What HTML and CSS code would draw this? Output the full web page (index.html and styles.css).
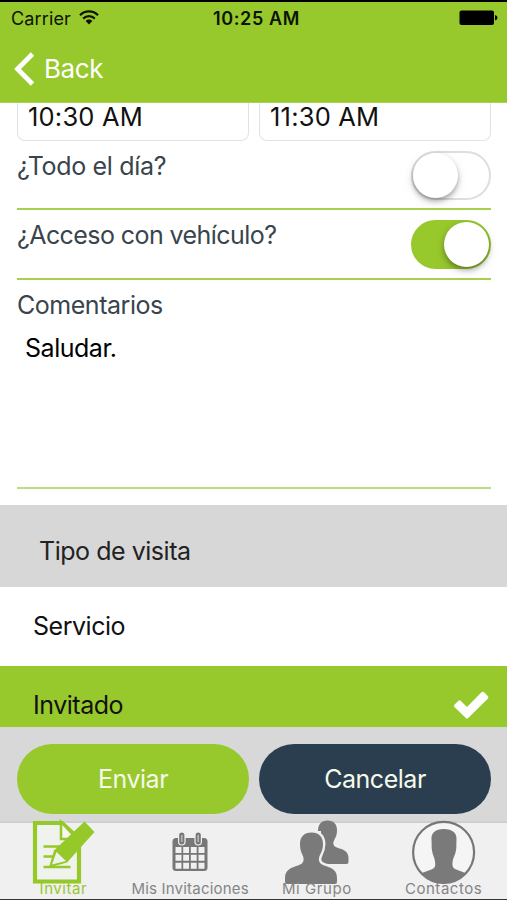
FILE: index.html
```html
<!DOCTYPE html>
<html lang="es">
<head>
<meta charset="utf-8">
<title>Invitar</title>
<link rel="stylesheet" href="styles.css">
</head>
<body>
<div class="phone">
  <header class="header">
    <div class="status">
      <div class="carrier"><span>Carrier</span>
        <svg class="wifi" width="20" height="15" viewBox="0 0 20 15"><g fill="none" stroke="#0c1402" stroke-width="2.2"><path d="M1 5.2C6 .2 14 .2 19 5.2"/><path d="M4.2 8.6c3.3-3.2 8.300-3.200 11.600 0"/></g><path d="M6.700 11c1.900-1.900 4.700-1.900 6.600 0L10 14.500z" fill="#0c1402"/></svg>
      </div>
      <span class="clock">10:25 AM</span>
      <svg class="battery" width="39" height="16" viewBox="0 0 39 16"><rect x=".5" y=".5" width="34.500" height="14.500" rx="2"/><path d="M36 5q2.500.5 2.500 2.800T36 10.500z"/></svg>
    </div>
    <div class="nav">
      <svg class="chevron" width="21" height="34" viewBox="0 0 21 34"><path d="M18.500 2L3.500 17l15 15" fill="none" stroke="#fff" stroke-width="4.800"/></svg>
      <span>Back</span>
    </div>
  </header>
  <main class="content">
    <div class="times">
      <div class="time">10:30 AM</div>
      <div class="time">11:30 AM</div>
    </div>
    <div class="row first"><span class="all-day">¿Todo el día?</span><span class="toggle"></span></div>
    <div class="row"><span class="vehicle">¿Acceso con vehículo?</span><span class="toggle on"></span></div>
    <div class="comments"><div class="label">Comentarios</div><div class="value">Saludar.</div></div>
    <div class="section">Tipo de visita</div>
    <div class="option"><span>Servicio</span></div>
    <div class="option selected"><span>Invitado</span>
      <svg class="check" width="36" height="28" viewBox="0 0 36 28"><path d="M1.400 13.800L5.400 9.800Q6.500 8.900 7.600 9.800L14 16 28.500 1.200Q29.800.2 31 1.200L35 5.300Q35.900 6.500 35 7.600L15.200 27Q14 28 12.800 27L1.400 16Q.5 14.900 1.400 13.800z" fill="#fff"/></svg>
    </div>
  </main>
  <div class="actions">
    <button class="btn send">Enviar</button>
    <button class="btn cancel">Cancelar</button>
  </div>
  <nav class="tabs">
    <div class="tab active">
      <svg width="64" height="64" viewBox="0 0 64 64"><path d="M4 2H31L48 18V60.500H4z" fill="#f0f2ed" stroke="#95c829" stroke-width="4.200"/><path d="M30 1v17h16z" fill="#f5f7f0" stroke="#95c829" stroke-width="2.500"/><path d="M12.500 25.500h17M12.500 35.500h10M12.500 46h27" stroke="#95c829" stroke-width="2.600"/><path d="M18 46.500L23 29.500 53.500.5 63.500 11 36 41.500z" fill="#95c829"/><path d="M21 43.500l4.500-12.500 9.500 9z" fill="#f0f2ed"/></svg>
      <span class="wide">Invitar</span>
    </div>
    <div class="tab">
      <svg width="64" height="64" viewBox="0 0 64 64"><rect x="14.500" y="17" width="35" height="33" rx="3.500" fill="#777"/><path fill="#f0f0f0" d="M17.500 26h6v6h-6zm7.700 0H31v6h-5.800zm7.600 0h5.900v6h-5.900zm7.700 0h6v6h-6zM17.500 33.800h6v6h-6zm7.700 0H31v6h-5.800zm7.600 0h5.900v6h-5.900zm7.700 0h6v6h-6zM17.500 41.700h6v6h-6zm7.700 0H31v6h-5.800zm7.600 0h5.900v6h-5.900zm7.700 0h6v6h-6z"/><g fill="#777" stroke="#f0f0f0" stroke-width="1.200"><rect x="20.600" y="11" width="6.400" height="13" rx="3.200"/><rect x="37" y="11" width="6.400" height="13" rx="3.200"/></g><path d="M23.800 14v7M40.200 14v7" stroke="#b5b5b5" stroke-width="1.600"/></svg>
      <span>Mis Invitaciones</span>
    </div>
    <div class="tab">
      <svg width="64" height="64" viewBox="0 0 64 64"><g fill="#7a7a7a"><path d="M42.500-.5C49-.5 52 3.500 52 9c0 5-1.200 7-2.500 9.500-1 2-1.500 3.500-1 5 .8 2.500 3 3 6 4 5.500 1.500 9 4 9 9.500v4q0 2-2 2H36V10h-3C33 3.500 36.500-.5 42.500-.5z"/><path stroke="#f0f0f0" stroke-width="5" paint-order="stroke" d="M26.500 11.500C34 11.500 38 16 38 23c0 5-1.500 8-3 11-1.200 2.500-1.500 5-.5 7 1 2.500 3.500 3 7 4.200 7 2.300 10.500 5 10.500 12V61q0 2-2 2H2q-2 0-2-2v-3.800c0-7 4-9.700 10.500-12 3.500-1.200 6.500-1.700 7.500-4.200 1-2 .7-4.500-.5-7-1.500-3-2.500-6-2.500-11 0-7 4-11.500 11.500-11.500z"/></g></svg>
      <span class="wide">Mi Grupo</span>
    </div>
    <div class="tab">
      <svg width="64" height="64" viewBox="0 0 64 64"><circle cx="31.600" cy="31.300" r="30.500" fill="#f5f5f5" stroke="#777" stroke-width="2.200"/><path fill="#7a7a7a" d="M31.700 8c9 0 13.500 4 12.800 11.500-.3 3 0 5-.2 7.500-.3 4-1.500 7-2.800 10-1 2.500-1.200 5-1 7.500.2 2.500 2 3.500 5 4.500L54 52.200A30.500 30.500 0 0 1 9.200 52.200L18 49c3-1 5-2 5.200-4.500.2-2.500-.2-5-1-7.500-1.200-3-2.200-6-2.500-10-.2-2.500.1-4.500-.2-7.500C18.800 12 23 8 31.700 8z"/></svg>
      <span class="wide">Contactos</span>
    </div>
  </nav>
</div>
</body>
</html>
```
FILE: styles.css
```css
* { box-sizing: border-box; }
body { margin: 0; font-family: Inter, "Liberation Sans", sans-serif; font-size: 25px; line-height: 30px; letter-spacing: -.47px; color: #111; background: #fff; }
span { white-space: nowrap; }
svg { display: block; flex: none; }
.phone { width: 507px; height: 900px; display: flex; flex-direction: column; overflow: hidden; border-bottom: 1px solid #333; }
.header { height: 103px; flex: none; background: #97c82c; border-top: 2px solid #000; border-bottom: 1px solid #a9d155; }
.status { height: 33px; display: grid; grid-template-columns: 1fr auto 1fr; align-items: center; padding: 0 9px 0 11px; font-size: 18px; letter-spacing: .15px; color: #0c1402; }
.carrier { display: flex; align-items: center; gap: 8px; }
.wifi { margin-bottom: 2px; }
.clock { font-weight: 600; font-size: 18px; letter-spacing: .6px; padding-left: 4px; }
.battery { justify-self: end; margin-bottom: 1px; }
.nav { display: flex; align-items: center; gap: 9px; height: 67px; padding-left: 14px; color: #fff; font-size: 26px; letter-spacing: -.4px; }
.content { flex: none; height: 624px; overflow: hidden; }
.times { display: flex; gap: 10px; padding: 0 16px 0 17px; font-size: 25.500px; letter-spacing: .2px; }
.time { height: 38px; width: 232px; border: 1px solid #e2e2e2; border-top: 0; border-radius: 0 0 8px 8px; padding-left: 10px; line-height: 28px; color: #111; }
.row { display: flex; justify-content: space-between; align-items: flex-start; height: 70px; margin: 0 16px 0 17px; padding-top: 10px; border-bottom: 2px solid #a6d04e; color: #39444c; }
.row.first { height: 69px; }
.all-day { letter-spacing: -.33px; }
.vehicle { letter-spacing: -.57px; }
.toggle { width: 80px; height: 49px; border-radius: 25px; border: 2px solid #dedede; background: #fff; display: flex; justify-content: flex-start; }
.toggle::before { content: ""; width: 45px; height: 45px; border-radius: 50%; background: #fff; box-shadow: 0 3px 5px rgba(0,0,0,.3), 0 4px 12px rgba(0,0,0,.1); }
.toggle.on { background: #97c82c; border-color: #97c82c; justify-content: flex-end; }
.comments { height: 209px; margin: 0 16px 0 17px; padding-top: 10px; border-bottom: 2px solid #bddb82; }
.label { color: #39444c; }
.value { color: #000; padding: 13px 8px; }
.section { height: 82px; margin-top: 16px; background: #d7d7d7; padding: 31px 39px 0; color: #222; }
.option { height: 79px; padding: 24px 18px 0 33px; display: flex; justify-content: space-between; align-items: flex-start; }
.option.selected { background: #97c82c; }
.check { margin-top: 1px; }
.actions { flex: none; height: 94px; display: flex; gap: 10px; padding: 17px 16px 8px 17px; background: #d8d8d8; }
.btn { width: 232px; height: 70px; border: 0; border-radius: 35px; font: inherit; letter-spacing: inherit; color: #f5faea; padding: 0; }
.send { background: #97c82c; }
.cancel { background: #2b3e50; }
.tabs { flex: none; height: 78px; display: grid; grid-template-columns: repeat(4, 1fr); background: #f0f0f0; border-top: 2px solid #cfcfcf; font-size: 15px; line-height: 18px; letter-spacing: .2px; color: #858585; }
.tab { display: flex; flex-direction: column; align-items: center; }
.tab span { margin-top: -5px; position: relative; }
.tab .wide { letter-spacing: .55px; }
.tab svg { margin-top: -2px; overflow: visible; }
.active { color: #97c82c; }
```
